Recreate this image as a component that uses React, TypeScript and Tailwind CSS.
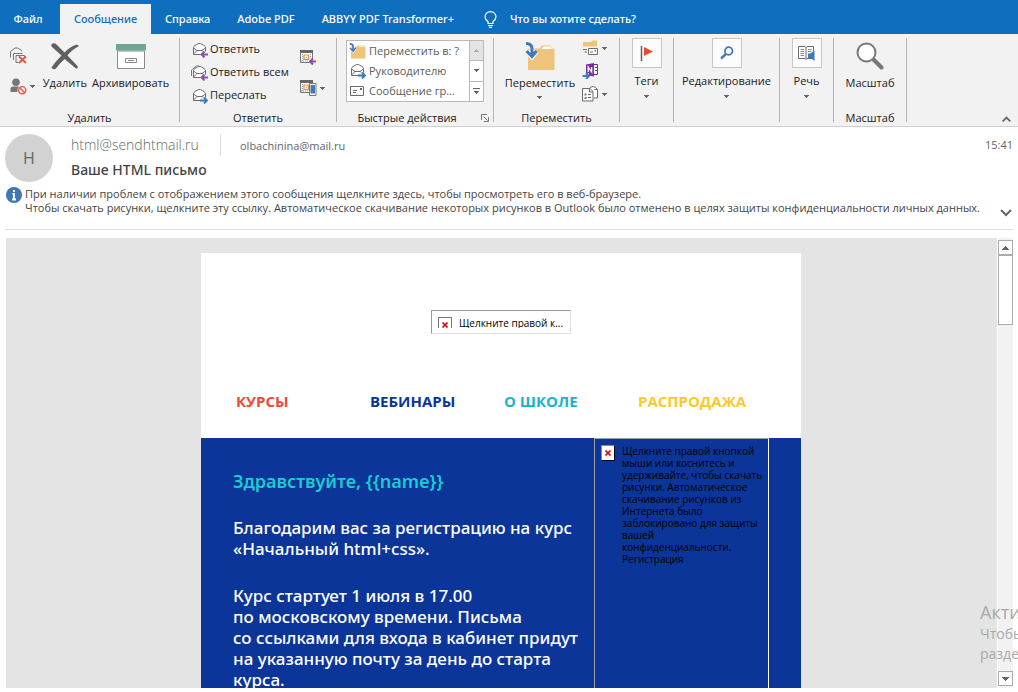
import React from "react";

const TABS = ["Справка", "Adobe PDF", "ABBYY PDF Transformer+"];

const NAV = [
  { text: "КУРСЫ", color: "text-[#ef4b38]" },
  { text: "ВЕБИНАРЫ", color: "text-[#0b3599]" },
  { text: "О ШКОЛЕ", color: "text-[#16b4cd]" },
  { text: "РАСПРОДАЖА", color: "text-[#fdc82a]" },
];

function Caret({ className = "" }: { className?: string }) {
  return (
    <svg viewBox="0 0 5 3" className={`h-[3px] w-[5px] shrink-0 ${className}`} shapeRendering="crispEdges">
      <path d="M0 0h5L2.500 3z" fill="#666" />
    </svg>
  );
}

function ScrollArrow({ className = "" }: { className?: string }) {
  return (
    <svg viewBox="0 0 7 4" className={`h-1 w-[7px] shrink-0 ${className}`} shapeRendering="crispEdges">
      <path d="M0 0h7L3.500 4z" fill="#666" />
    </svg>
  );
}

function Cross({ className = "" }: { className?: string }) {
  return (
    <svg viewBox="0 0 6 6" className={`h-[6px] w-[6px] ${className}`}>
      <path d="M0.500 0.500l5 5M5.500 0.500l-5 5" stroke="#d80f1b" strokeWidth="1.700" />
    </svg>
  );
}

/* Open envelope with a coloured arrow in the corner */
function Envelope({ kind }: { kind: "reply" | "all" | "forward" }) {
  return (
    <svg viewBox="0 0 17 16" className="h-4 w-[17px] shrink-0" fill="none">
      {kind === "all" && <path d="M0.500 11V5L5.500 1H8" stroke="#777" />}
      <path
        d="M2.500 12.500V5.800Q2.500 4.500 4 3.500L7.500 1.500H9.500L13 3.500Q14.500 4.500 14.500 5.800V12.500z"
        fill="#fff"
        stroke="#6b6b6b"
      />
      <path d="M2.500 6L6 8.500h5L14.500 6M2.500 12L6 8.500M11 8.500L14 11" stroke="#6b6b6b" />
      <path d="M9.500 9.500H17V16H9.500z" fill="#f2f2f2" />
      {kind === "forward" ? (
        <path d="M9 12.500h7M13 9.500l3 3-3 3" stroke="#3f78bd" strokeWidth="1.900" />
      ) : (
        <path d="M17 12.500H10M13.500 9.500l-3 3 3 3" stroke="#8950a8" strokeWidth="1.900" />
      )}
    </svg>
  );
}

function CleanupIcon() {
  return (
    <svg viewBox="0 0 17 17" className="h-[17px] w-[17px] shrink-0" fill="none" stroke="#777">
      <path d="M0.500 10.500V4.500L5 1h3l4 3" />
      <path d="M3.500 13V6.500H12.500M6 15.500V8.500H14.500V10M6 15.500H8.500" />
      <path d="M9 9.500l7 6.500M16 9.500l-7 6.500" stroke="#e2583c" strokeWidth="1.900" />
    </svg>
  );
}

function JunkIcon() {
  return (
    <svg viewBox="0 0 17 17" className="h-[17px] w-[17px] shrink-0" fill="none">
      <circle cx="6" cy="4.300" r="3.800" fill="#777" />
      <path d="M0.500 14V11Q0.500 8.500 3 8.500H9Q7 10.500 7.500 14z" fill="#777" />
      <circle cx="12.200" cy="12.200" r="3.600" fill="#f2f2f2" stroke="#e2583c" strokeWidth="1.400" />
      <path d="M9.800 9.800l4.900 4.900" stroke="#e2583c" strokeWidth="1.400" />
    </svg>
  );
}

function DeleteIcon() {
  return (
    <svg viewBox="0 0 30 28" className="h-7 w-[30px]">
      <path d="M2.500 1.500Q4.500 0.500 6.500 2.500L14.500 10.500Q20 4.500 27 2.500L29 4Q22 7.500 17.500 13.500L27.500 24Q28.500 27 26 26.500L14.500 17Q9 22 6 26.500Q3 28.500 1.500 25.500Q5 20 11.500 13.500L1.500 4.500Q0.800 2.500 2.500 1.500z" fill="#606060" />
    </svg>
  );
}

function ArchiveIcon() {
  return (
    <svg viewBox="0 0 30 25" className="h-[25px] w-[30px]">
      <path d="M1.500 7h27v17.500h-27z" fill="#fff" stroke="#8a8a8a" />
      <path d="M0 0h30v6.500H0z" fill="#6fa591" />
      <path d="M9.500 14.500h11v4h-11zM12 16.500h6" fill="none" stroke="#888" />
    </svg>
  );
}

function CalendarIcon({ phone = false }: { phone?: boolean }) {
  return (
    <svg viewBox="0 0 17 16" className="h-4 w-[17px] shrink-0" fill="none">
      <path d="M0.500 2v10.500h12V2" fill="#fff" stroke="#777" />
      <path d="M0 0h13v3H0z" fill="#666" />
      <path d="M2.500 4v8M10.500 4v8M1 11h11" stroke="#999" strokeDasharray="1 1" />
      <path d="M4 5h4.500v4.500H4z" fill="#fff" stroke="#e28f45" strokeWidth="1.200" />
      <path d="M5.800 6.800h1v1h-1z" fill="#c27a3c" />
      {phone ? (
        <>
          <path d="M9.500 3.500h6.500v12H9.500z" fill="#fff" stroke="#777" />
          <path d="M10.500 5h4.500v8.500h-4.500z" fill="#3f78bd" />
        </>
      ) : (
        <>
          <path d="M9.500 8.500H17V16H9.500z" fill="#f2f2f2" />
          <path d="M16 11.500H10M13 8.500l-3 3 3 3" stroke="#8950a8" strokeWidth="1.900" />
        </>
      )}
    </svg>
  );
}

function FolderIcon({ className }: { className: string }) {
  return (
    <svg viewBox="0 0 30 29" className={className} fill="none">
      <path d="M3 6.500h11l3-3h8.500L27 6.500h2.500V28H3z" fill="#eec37c" />
      <path d="M16.500 7l2-2.500h7L27 7z" fill="#fff" />
      <path d="M1 1.500Q7 1.500 7 7v7M1.500 9.500l5.500 5.500L11.500 9.500" stroke="#f2f2f2" strokeWidth="5" />
      <path d="M1 1.500Q7 1.500 7 7v6M1.500 9l5.500 5.500L11.500 9" stroke="#3f78bd" strokeWidth="3" />
    </svg>
  );
}

function MailCardIcon() {
  return (
    <svg viewBox="0 0 16 12" className="h-3 w-4 shrink-0" fill="none" stroke="#6b6b6b">
      <path d="M1.500 1.500h13v9h-13z" fill="#fff" />
      <path d="M4 5.500h4M4 7.500h3" />
      <path d="M11 3h2v2h-2z" fill="#666" stroke="none" />
    </svg>
  );
}

function RulesIcon() {
  return (
    <svg viewBox="0 0 17 16" className="h-4 w-[17px] shrink-0" fill="none">
      <path d="M1 2h8L10.500 0.500H15v6H1z" fill="#eec37c" />
      <path d="M6.500 8.500h9v6h-9z" fill="#fff" stroke="#6b6b6b" />
      <path d="M8 12h3M1 9.500h4M2.500 12h2.500" stroke="#6b6b6b" />
      <path d="M12.500 10h1.500v1.500h-1.500z" fill="#6b6b6b" />
    </svg>
  );
}

function OneNoteIcon() {
  return (
    <svg viewBox="0 0 17 16" className="h-4 w-[17px] shrink-0" fill="none">
      <path d="M11 1.500h4.500v10H11z" fill="#fff" stroke="#7b2ba5" />
      <path d="M13 4.500h2.500M13 7.500h2.500" stroke="#7b2ba5" />
      <path d="M4 1.500L12 0v13.500L4 12z" fill="#7b2ba5" />
      <path d="M6.200 9V4l3.500 5V4" stroke="#fff" strokeWidth="1.300" />
      <path d="M0 10h7V16H0z" fill="#f2f2f2" />
      <path d="M0.500 13h6.500M4 10l3 3-3 3" stroke="#3f78bd" strokeWidth="1.900" />
    </svg>
  );
}

function ActionsIcon() {
  return (
    <svg viewBox="0 0 17 16" className="h-4 w-[17px] shrink-0" fill="none" stroke="#6b6b6b">
      <path d="M7.500 3Q8 0.500 11 0.500T15.500 4V12H12" fill="#fff" />
      <path d="M12.500 3.500h3" />
      <path d="M0.500 2.500h7.500l3 3V15H0.500z" fill="#fff" />
      <path d="M7.500 2.500v3.500h3.500M6 8.500h3M6 11.500h3" />
      <path d="M2.500 7.500h2v2h-2zM2.500 11h2v2h-2z" fill="#777" stroke="none" />
    </svg>
  );
}

function FlagIcon() {
  return (
    <svg viewBox="0 0 14 15" className="h-[15px] w-3.5">
      <path d="M1.500 0v15" stroke="#606060" strokeWidth="1.500" />
      <path d="M4 1l9 4.500L4 10z" fill="#e04f33" />
    </svg>
  );
}

function FindIcon() {
  return (
    <svg viewBox="0 0 14 14" className="h-3.5 w-3.5" fill="none" stroke="#3f78bd">
      <circle cx="8.700" cy="5" r="3.800" strokeWidth="1.700" />
      <path d="M6 8L1 12.500" strokeWidth="2.400" />
    </svg>
  );
}

function SpeechIcon() {
  return (
    <svg viewBox="0 0 17 16" className="h-4 w-[17px]" fill="none">
      <path d="M0.500 1.500h6.500l1 1 1-1h6.500v12H9l-1 1-1-1H0.500zM8 2v12" fill="#fff" stroke="#6b6b6b" />
      <path d="M2.500 4.500h3.500M2.500 6.500h3.500M2.500 8.500h3.500M2.500 10.500h3.500M10 4.500h3.500M10 6.500h3.500" stroke="#888" />
      <path d="M10 8.500h2.500l4-3v10.500l-4-3H10z" fill="#3f78bd" />
    </svg>
  );
}

function ZoomIcon() {
  return (
    <svg viewBox="0 0 28 28" className="h-7 w-7">
      <path d="M17.500 17.500l8 8" stroke="#777" strokeWidth="4" strokeLinecap="round" />
      <circle cx="10.500" cy="10.500" r="9" fill="#fff" stroke="#777" strokeWidth="2" />
    </svg>
  );
}

function Group({ label, width, launcher = false, children }: { label?: string; width: string; launcher?: boolean; children: React.ReactNode }) {
  return (
    <section className={`flex h-[84px] shrink-0 flex-col border-r border-[#b4b4b4] ${width}`}>
      <div className="flex flex-1">{children}</div>
      {label && (
        <div className={`relative -mb-1 text-center leading-4 ${launcher ? "pr-4" : ""}`}>
          {label}
          {launcher && (
            <button aria-label="Параметры быстрых действий" className="absolute right-1 top-1">
              <svg viewBox="0 0 8 8" className="h-2 w-2" fill="none" stroke="#777">
                <path d="M0.500 6V0.500H6M2.500 2.500l4 4M7.500 3v4.500H3" />
              </svg>
            </button>
          )}
        </div>
      )}
    </section>
  );
}

function LargeButton({ icon, label, caret = false }: { icon: React.ReactNode; label: string; caret?: boolean }) {
  return (
    <button className="flex flex-col items-center">
      <span className="flex h-9 items-center justify-center">{icon}</span>
      <span className="leading-[18px]">{label}</span>
      {caret && <Caret className="mt-1" />}
    </button>
  );
}

function BoxedButton({ icon, label }: { icon: React.ReactNode; label: string }) {
  return (
    <button className="flex flex-1 flex-col items-center">
      <span className="mb-1 flex h-[30px] w-[30px] items-center justify-center border border-[#c6c6c6] bg-[#fcfcfc]">{icon}</span>
      <span className="leading-[18px]">{label}</span>
      <Caret className="mt-[5px]" />
    </button>
  );
}

function Ribbon() {
  return (
    <div className="relative flex border-b border-[#d0d0d0] bg-[#f2f2f2] pb-1 pt-1 text-[11px] text-[#202020]">
      <Group label="Удалить" width="w-[180px]">
        <div className="flex w-[33px] shrink-0 flex-col gap-3.5 pl-2.5 pt-[9px]">
          <button aria-label="Очистить"><CleanupIcon /></button>
          <button aria-label="Нежелательная почта" className="flex items-center gap-[3px]"><JunkIcon /><Caret /></button>
        </div>
        <div className="flex flex-1 justify-center gap-[5px]">
          <LargeButton icon={<DeleteIcon />} label="Удалить" />
          <LargeButton icon={<ArchiveIcon />} label="Архивировать" />
        </div>
      </Group>
      <Group label="Ответить" width="w-[157px]">
        <div className="flex w-[120px] flex-col pl-[11px]">
          <button className="flex h-[23px] items-center gap-0.5 whitespace-nowrap"><Envelope kind="reply" />Ответить</button>
          <button className="flex h-[23px] items-center gap-0.5 whitespace-nowrap"><Envelope kind="all" />Ответить всем</button>
          <button className="flex h-[23px] items-center gap-0.5 whitespace-nowrap"><Envelope kind="forward" />Переслать</button>
        </div>
        <div className="flex flex-col gap-3.5 pt-3">
          <button aria-label="Собрание"><CalendarIcon /></button>
          <button aria-label="Дополнительно" className="flex items-center gap-[3px]"><CalendarIcon phone /><Caret /></button>
        </div>
      </Group>
      <Group label="Быстрые действия" width="w-[157px]" launcher>
        <div className="ml-[9px] mt-0.5 flex h-[62px] w-[138px] border border-[#b9b9b9] bg-white text-[#5a5a5a]">
          <ul className="flex flex-1 flex-col whitespace-nowrap">
            <li className="flex h-5 items-center gap-[3px] pl-0.5"><FolderIcon className="h-4 w-[17px] shrink-0" />Переместить в: ?</li>
            <li className="flex h-5 items-center gap-[3px] pl-0.5"><Envelope kind="forward" />Руководителю</li>
            <li className="flex h-5 items-center gap-1 pl-0.5"><MailCardIcon />Сообщение гр...</li>
          </ul>
          <div className="flex w-3.5 flex-col divide-y divide-[#b9b9b9] border-l border-[#b9b9b9]">
            <button aria-label="Вверх" className="flex flex-1 items-center justify-center bg-[#e4e4e4]"><Caret className="rotate-180 opacity-40" /></button>
            <button aria-label="Вниз" className="flex flex-1 items-center justify-center"><Caret /></button>
            <button aria-label="Все действия" className="flex flex-1 flex-col items-center justify-center gap-0.5"><span className="h-px w-[7px] bg-[#666]" /><Caret /></button>
          </div>
        </div>
      </Group>
      <Group label="Переместить" width="w-[126px]">
        <div className="flex w-[88px] shrink-0 justify-center pl-1">
          <LargeButton icon={<FolderIcon className="h-[29px] w-[30px]" />} label="Переместить" caret />
        </div>
        <div className="flex flex-col gap-[7px] pt-0.5">
          <button aria-label="Правила" className="flex items-center gap-[3px]"><RulesIcon /><Caret /></button>
          <button aria-label="OneNote"><OneNoteIcon /></button>
          <button aria-label="Действия" className="flex items-center gap-[3px]"><ActionsIcon /><Caret /></button>
        </div>
      </Group>
      <Group width="w-[54px]"><BoxedButton icon={<FlagIcon />} label="Теги" /></Group>
      <Group width="w-[106px]"><BoxedButton icon={<FindIcon />} label="Редактирование" /></Group>
      <Group width="w-[54px]"><BoxedButton icon={<SpeechIcon />} label="Речь" /></Group>
      <Group label="Масштаб" width="w-[73px]">
        <div className="flex flex-1 justify-center"><LargeButton icon={<ZoomIcon />} label="Масштаб" /></div>
      </Group>
      <button aria-label="Свернуть ленту" className="ml-auto mr-[7px] self-end">
        <svg viewBox="0 0 9 6" className="h-1.5 w-[9px]" fill="none"><path d="M0.700 5.300l3.800-3.800 3.800 3.800" stroke="#666" strokeWidth="1.800" /></svg>
      </button>
    </div>
  );
}

function MessageHeader() {
  return (
    <header className="mx-[5px] border-b border-[#dedede] text-[#444]">
      <div className="flex pt-[7px]">
        <div className="mr-[18px] flex h-12 w-12 shrink-0 items-center justify-center rounded-full bg-[#d2d2d2] text-base text-[#666]">H</div>
        <div className="flex-1">
          <div className="flex h-[22px] items-center text-[#666]">
            <span className="w-[149px] text-sm font-light">html@sendhtmail.ru</span>
            <span className="h-[22px] border-l border-[#dcdcdc] pl-[19px] text-[11px] leading-6">olbachinina@mail.ru</span>
            <time className="ml-auto text-[11px]">15:41</time>
          </div>
          <h1 className="mt-1 font-['Noto_Sans','Open_Sans',sans-serif] text-sm font-medium leading-5">Ваше HTML письмо</h1>
        </div>
      </div>
      <div className="flex gap-[3px] pb-3.5 pl-px pt-[5px]">
        <svg viewBox="0 0 16 16" className="h-4 w-4 shrink-0">
          <circle cx="8" cy="8" r="8" fill="#4077b0" />
          <path d="M8 3v2M6.500 7H8v5.500M6 12.500h4" stroke="#fff" strokeWidth="1.800" fill="none" />
        </svg>
        <div className="flex-1 whitespace-nowrap text-[11px] leading-[14px]">
          <p>При наличии проблем с отображением этого сообщения щелкните здесь, чтобы просмотреть его в веб-браузере.</p>
          <p>Чтобы скачать рисунки, щелкните эту ссылку. Автоматическое скачивание некоторых рисунков в Outlook было отменено в целях защиты конфиденциальности личных данных.</p>
        </div>
        <button aria-label="Развернуть" className="-mb-0.5 mr-px self-end">
          <svg viewBox="0 0 12 8" className="h-2 w-3" fill="none"><path d="M1 1l5 5 5-5" stroke="#666" strokeWidth="2" /></svg>
        </button>
      </div>
    </header>
  );
}

function Letter() {
  return (
    <article className="mx-auto flex h-full w-[600px] flex-col pt-[15px]">
      <div className="flex h-[185px] shrink-0 flex-col items-center bg-white pt-[57px]">
        <div className="flex h-6 w-[140px] items-start border border-b-[#e0e0e0] border-l-[#999] border-r-[#e0e0e0] border-t-[#999] px-1.5 pt-1.5">
          <div className="flex h-[11px] flex-1 gap-[7px] overflow-hidden text-[10px] leading-3 text-black">
            <span className="flex h-4 w-3.5 shrink-0 justify-center border border-[#777] pt-1"><Cross /></span>
            <span className="whitespace-nowrap">Щелкните правой к...</span>
          </div>
        </div>
        <nav className="mt-14 grid w-full grid-cols-4 pl-[35px] pr-[29px] text-[15px] font-bold leading-[22px]">
          {NAV.map((item) => (
            <a key={item.text} href="#" className={`whitespace-nowrap ${item.color}`}>{item.text}</a>
          ))}
        </nav>
      </div>
      <div className="flex flex-1 bg-[#0b3599] pl-8 pr-8">
        <div className="flex-1 whitespace-nowrap pt-8 font-['Noto_Sans','Open_Sans',sans-serif] text-[17px] font-medium leading-[21px] text-white">
          <h2 className="text-lg font-semibold leading-[22px] text-[#1ccbce]">{"Здравствуйте, {{name}}"}</h2>
          <p className="mt-[25px]">Благодарим вас за регистрацию на курс<br />«Начальный html+css».</p>
          <p className="mt-[26px]">Курс стартует 1 июля в 17.00<br />по московскому времени. Письма<br />со ссылками для входа в кабинет придут<br />на указанную почту за день до старта<br />курса.</p>
        </div>
        <div className="flex w-[175px] shrink-0 gap-[7px] border-l border-r border-t border-l-[#a0a0a0] border-r-white border-t-[#a0a0a0] pl-1.5 pt-1.5 text-[10px] leading-3 text-black">
          <span className="flex h-4 w-3.5 shrink-0 items-center justify-center border border-[#888] border-b-black border-r-black bg-white"><Cross /></span>
          <p className="whitespace-nowrap">Щелкните правой кнопкой<br />мыши или коснитесь и<br />удерживайте, чтобы скачать<br />рисунки. Автоматическое<br />скачивание рисунков из<br />Интернета было<br />заблокировано для защиты<br />вашей<br />конфиденциальности.<br />Регистрация</p>
        </div>
      </div>
    </article>
  );
}

export default function App() {
  return (
    <div className="relative flex h-screen flex-col overflow-hidden bg-white font-['Open_Sans','Noto_Sans',sans-serif]">
      <div className="flex h-[34px] shrink-0 items-stretch bg-[#106ebe] pt-1 font-['Noto_Sans','Open_Sans',sans-serif] text-[11px] font-medium text-white">
        <button className="w-[60px] pr-1">Файл</button>
        <button className="w-[91px] bg-[#f2f2f2] text-[#106ebe]">Сообщение</button>
        <div className="flex gap-[27px] pl-3.5">
          {TABS.map((tab) => <button key={tab}>{tab}</button>)}
        </div>
        <button className="ml-[30px] flex items-center gap-[13px]">
          <svg viewBox="0 0 13 17" className="h-[17px] w-[13px]" fill="none" stroke="#fff" strokeWidth="1.200">
            <path d="M4 12.500V10.500Q1 8.500 1 5.800A5.300 5 0 0 1 12 5.800Q12 8.500 9 10.500V12.500zM4 14.500h5M5 16.300h3" />
          </svg>
          Что вы хотите сделать?
        </button>
      </div>
      <Ribbon />
      <MessageHeader />
      <main className="mb-1 mt-2 flex min-h-0 flex-1 pl-1.5 pr-[5px]">
        <div className="mr-px min-w-0 flex-1 overflow-hidden bg-[#e4e4e4] pr-px"><Letter /></div>
        <div className="flex w-[15px] flex-col bg-[#f2f2f2]">
          <button aria-label="Прокрутить вверх" className="mt-0.5 flex h-[15px] items-center justify-center border border-[#ababab] bg-white"><ScrollArrow className="rotate-180" /></button>
          <div className="h-[70px] border border-[#ababab] bg-white" />
          <button aria-label="Прокрутить вниз" className="mb-0.5 mt-auto flex h-[15px] items-center justify-center border border-[#ababab] bg-white"><ScrollArrow /></button>
        </div>
      </main>
      <aside className="absolute bottom-7 right-0 w-[38px] overflow-hidden whitespace-nowrap text-sm leading-5 text-[#a9a9a9]">
        <p className="text-lg leading-6">Акти</p>
        <p>Чтобы</p>
        <p>разде</p>
      </aside>
    </div>
  );
}
